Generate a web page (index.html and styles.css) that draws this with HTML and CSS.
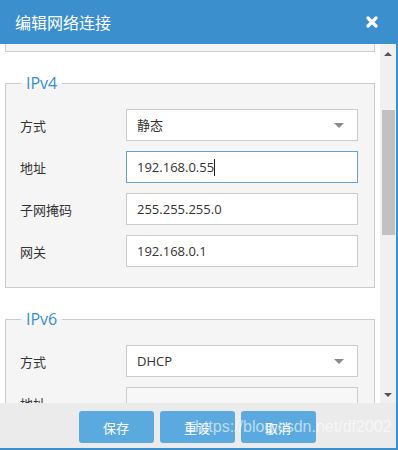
FILE: index.html
```html
<!DOCTYPE html>
<html lang="zh-CN">
<head>
    <meta charset="UTF-8">
    <meta name="viewport" content="width=device-width, initial-scale=1.0">
    <title>编辑网络连接</title>
    <link rel="stylesheet" href="styles.css">
</head>
<body>

    <div class="dialog">
        <!-- Заголовок -->
        <div class="dialog-header">
            <span class="dialog-title">编辑网络连接</span>
            <svg class="close-icon" width="12" height="12" viewBox="0 0 12 12">
                <path d="M2 2 L10 10 M10 2 L2 10" stroke="#fff" stroke-width="3.2" stroke-linecap="round"/>
            </svg>
        </div>

        <div class="dialog-body">
            <div class="dialog-content">
                <div class="fieldset-tail"></div>

                <fieldset class="group">
                    <legend>IPv4</legend>
                    <div class="form-row">
                        <label>方式</label>
                        <div class="field select">静态<span class="arrow"></span></div>
                    </div>
                    <div class="form-row">
                        <label>地址</label>
                        <div class="field focused">192.168.0.55<span class="caret"></span></div>
                    </div>
                    <div class="form-row">
                        <label>子网掩码</label>
                        <div class="field">255.255.255.0</div>
                    </div>
                    <div class="form-row">
                        <label>网关</label>
                        <div class="field">192.168.0.1</div>
                    </div>
                </fieldset>

                <fieldset class="group">
                    <legend>IPv6</legend>
                    <div class="form-row">
                        <label>方式</label>
                        <div class="field select">DHCP<span class="arrow"></span></div>
                    </div>
                    <div class="form-row">
                        <label>地址</label>
                        <div class="field disabled"></div>
                    </div>
                </fieldset>
            </div>

            <!-- Полоса прокрутки -->
            <div class="scrollbar">
                <span class="scroll-up"></span>
                <span class="scroll-thumb"></span>
                <span class="scroll-down"></span>
            </div>
        </div>

        <div class="dialog-footer">
            <button class="btn">保存</button>
            <button class="btn">重设</button>
            <button class="btn">取消</button>
        </div>

        <div class="watermark">https://blog.csdn.net/df2002</div>
    </div>

</body>
</html>
```

FILE: styles.css
```css
* {
    margin: 0;
    padding: 0;
    box-sizing: border-box;
}

body {
    font-family: 'Open Sans', 'Noto Sans CJK SC', sans-serif;
    background-color: #fff;
    color: #333;
}

.dialog {
    position: relative;
    width: 398px;
    height: 450px;
    border-right: 2px solid #3a8fcc;
    border-bottom: 2px solid #3a8fcc;
    overflow: hidden;
}

/* Заголовок */
.dialog-header {
    height: 44px;
    background-color: #3a8fcc;
    display: flex;
    justify-content: space-between;
    align-items: center;
    padding: 0 18px 0 15px;
}

.dialog-title {
    color: #fff;
    font-size: 16px;
}

.dialog-body {
    display: flex;
    height: 359px;
}

.dialog-content {
    width: 380px;
    padding: 0 5px 0 5px;
    overflow: hidden;
}

.fieldset-tail {
    height: 8px;
    border: 1px solid #ccc;
    border-top: none;
    background-color: #f5f5f5;
}

.group {
    margin-top: 21px;
    border: 1px solid #ccc;
    background-color: #f5f5f5;
    padding: 16px 16px 20px 14px;
    display: flex;
    flex-direction: column;
    gap: 10px;
}

.group legend {
    margin-left: 1px;
    padding: 0 5px;
    font-size: 16px;
    line-height: 20px;
    color: #3a8fcc;
}

.form-row {
    display: flex;
    align-items: center;
}

.form-row label {
    width: 106px;
    font-size: 13px;
}

.field {
    position: relative;
    width: 232px;
    height: 32px;
    border: 1px solid #ccc;
    background-color: #fff;
    font-size: 13px;
    line-height: 30px;
    padding-left: 10px;
}

.field.focused {
    border-color: #66a3d2;
}

.field.disabled {
    background-color: #f7f7f7;
}

.caret {
    display: inline-block;
    width: 1px;
    height: 17px;
    background-color: #222;
    vertical-align: -4px;
}

.arrow {
    position: absolute;
    right: 13px;
    top: 13px;
    border-left: 5px solid transparent;
    border-right: 5px solid transparent;
    border-top: 5px solid #8a8a8a;
}

/* Полоса прокрутки */
.scrollbar {
    width: 16px;
    background-color: #f0f0f0;
    position: relative;
}

.scroll-up,
.scroll-down {
    position: absolute;
    left: 4px;
    border-left: 4px solid transparent;
    border-right: 4px solid transparent;
}

.scroll-up {
    top: 8px;
    border-bottom: 4px solid #555;
}

.scroll-down {
    bottom: 6px;
    border-top: 4px solid #555;
}

.scroll-thumb {
    position: absolute;
    left: 2px;
    right: 1px;
    top: 66px;
    height: 125px;
    background-color: #c1c1c1;
}

/* Кнопки */
.dialog-footer {
    height: 45px;
    background-color: #ebebeb;
    display: flex;
    justify-content: center;
    align-items: flex-start;
    gap: 6px;
    padding-top: 8px;
    padding-right: 2px;
}

.btn {
    width: 75px;
    height: 32px;
    border: none;
    border-radius: 3px;
    background-color: #5aaadf;
    color: #fff;
    font-family: 'Open Sans', 'Noto Sans CJK SC', sans-serif;
    font-size: 13px;
}

.watermark {
    position: absolute;
    left: 195px;
    top: 418px;
    font-family: 'Liberation Sans', sans-serif;
    font-size: 16px;
    color: rgba(255, 255, 255, 0.6);
    white-space: nowrap;
}
```
